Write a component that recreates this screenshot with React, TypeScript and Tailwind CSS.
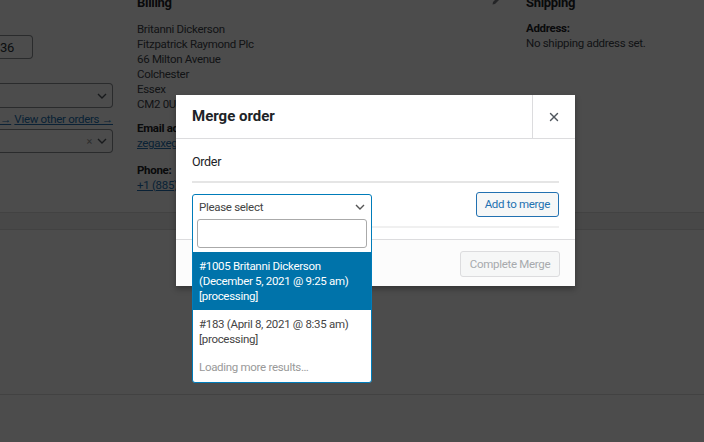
import { X } from 'lucide-react';

const BILLING = [
  'Britanni Dickerson',
  'Fitzpatrick Raymond Plc',
  '66 Milton Avenue',
  'Colchester',
  'Essex',
  'CM2 0UA',
];

function Chevron({ className = '' }: { className?: string }) {
  return (
    <svg className={className} width="10" height="6" viewBox="0 0 10 6" fill="none" stroke="currentColor" strokeWidth={1.4}>
      <path d="M1 1l4 4 4-4" />
    </svg>
  );
}

export default function App() {
  return (
    <div className="relative h-[442px] w-[704px] overflow-hidden bg-white font-['Roboto',sans-serif] text-[11.5px] leading-[15px] tracking-[-0.3px] text-[#3c434a]">
      {/* order data panel */}
      <div className="flex h-[213px] border-b border-[#dcdcde] bg-white">
        {/* general column */}
        <div className="flex w-[113px] flex-col pt-[35px]">
          <div className="flex h-[24px] w-[33px] items-center rounded-r-[4px] border border-l-0 border-[#8c8f94] text-[13px] text-[#2c3338]">
            36
          </div>
          <div className="mt-[24px] flex h-[25px] items-center justify-end rounded-r-[4px] border border-l-0 border-[#8c8f94] pr-[5px] text-[#50575e]">
            <Chevron />
          </div>
          <div className="mt-[3px] flex h-[16px] items-center justify-between whitespace-nowrap text-[#2271b1]">
            <span className="underline">→</span>
            <span className="underline">View other orders →</span>
          </div>
          <div className="mt-[2px] flex h-[24px] items-center justify-end gap-[5px] rounded-r-[4px] border border-l-0 border-[#8c8f94] pr-[5px] text-[#50575e]">
            <span className="text-[11px] text-[#999]">×</span>
            <Chevron />
          </div>
        </div>

        {/* billing column */}
        <div className="-mt-[5px] ml-[24px] flex w-[330px] flex-col">
          <div className="text-[13px] font-bold leading-[16px] text-[#1d2327]">Billing</div>
          <div className="mt-[11px]">
            {BILLING.map((line) => (
              <div key={line}>{line}</div>
            ))}
          </div>
          <div className="mt-[9px] font-bold text-[#1d2327]">Email address:</div>
          <a className="text-[#2271b1] underline">zegaxeg@mailinator.com</a>
          <div className="mt-[12px] font-bold text-[#1d2327]">Phone:</div>
          <a className="text-[#2271b1] underline">+1 (885) 417-3127</a>
        </div>

        {/* pencil */}
        <div className="-mt-[6px] ml-[24px] w-[35px] text-[#787c82]">
          <svg width="12" height="12" viewBox="0 0 12 12" fill="currentColor">
            <path d="M8.5 1.5l2 2-6.5 6.5-2.5.5.5-2.5z" />
          </svg>
        </div>

        {/* shipping column */}
        <div className="-mt-[5px] flex flex-col">
          <div className="text-[13px] font-bold leading-[16px] text-[#1d2327]">Shipping</div>
          <div className="mt-[10px] font-bold text-[#1d2327]">Address:</div>
          <div>No shipping address set.</div>
        </div>
      </div>
      <div className="h-[17px] border-b border-[#dcdcde] bg-[#f0f0f1]" />
      <div className="h-[165px] border-b border-[#dcdcde] bg-white" />

      {/* backdrop */}
      <div className="absolute inset-0 bg-black/70" />

      {/* modal */}
      <div className="absolute left-[176px] top-[95px] w-[399px] bg-white text-[#3c434a] shadow-[0_3px_6px_rgba(0,0,0,0.3)]">
        <div className="flex h-[44px] items-stretch border-b border-[#dcdcde]">
          <h1 className="flex flex-1 items-center pl-[16px] text-[15px] font-bold tracking-normal text-[#1d2327]">Merge order</h1>
          <button type="button" className="flex w-[43px] items-center justify-center border-l border-[#dcdcde] text-[#50575e]">
            <X size={14} strokeWidth={2.5} />
          </button>
        </div>

        <div className="px-[16px] pb-[11px] pt-[15px]">
          <div className="text-[12.5px] leading-[16px] text-[#1d2327]">Order</div>
          <div className="mt-[11px] h-[2px] bg-[#e5e5e5]" />
          <div className="mt-[10px] flex items-start justify-between">
            <div className="relative w-[180px]">
              <div className="h-[26px]" />
              {/* select2 open */}
              <div className="absolute left-0 top-[1px] z-10 w-[180px] rounded-[3px] border border-[#007cba] bg-white">
                <div className="flex h-[24px] items-center justify-between px-[6px] text-[#444]">
                  <span>Please select</span>
                  <Chevron className="text-[#555]" />
                </div>
                <div className="px-[4px]">
                  <div className="h-[29px] rounded-[3px] border border-[#aaa]" />
                </div>
                <div className="mt-[4px]">
                  <div className="bg-[#0073aa] px-[6px] py-[6.5px] text-white">
                    #1005 Britanni Dickerson (December 5, 2021 @ 9:25 am) [processing]
                  </div>
                  <div className="px-[6px] py-[6.5px] text-[#444]">#183 (April 8, 2021 @ 8:35 am) [processing]</div>
                  <div className="px-[6px] pb-[7px] pt-[6.5px] text-[#999]">Loading more results…</div>
                </div>
              </div>
            </div>
            <button
              type="button"
              className="-mt-[1px] h-[25px] rounded-[3px] border border-[#2271b1] bg-[#f6f7f7] px-[8px] text-[#2271b1]"
            >
              Add to merge
            </button>
          </div>
          <div className="mt-[7px] h-[2px] bg-[#f0f0f0]" />
        </div>

        <div className="flex justify-end border-t border-[#dcdcde] bg-[#fcfcfc] px-[15px] pb-[9px] pt-[11px]">
          <button
            type="button"
            className="h-[26px] w-[100px] rounded-[3px] border border-[#dcdcde] bg-[#f6f7f7] text-[#a7aaad]"
          >
            Complete Merge
          </button>
        </div>
      </div>
    </div>
  );
}
